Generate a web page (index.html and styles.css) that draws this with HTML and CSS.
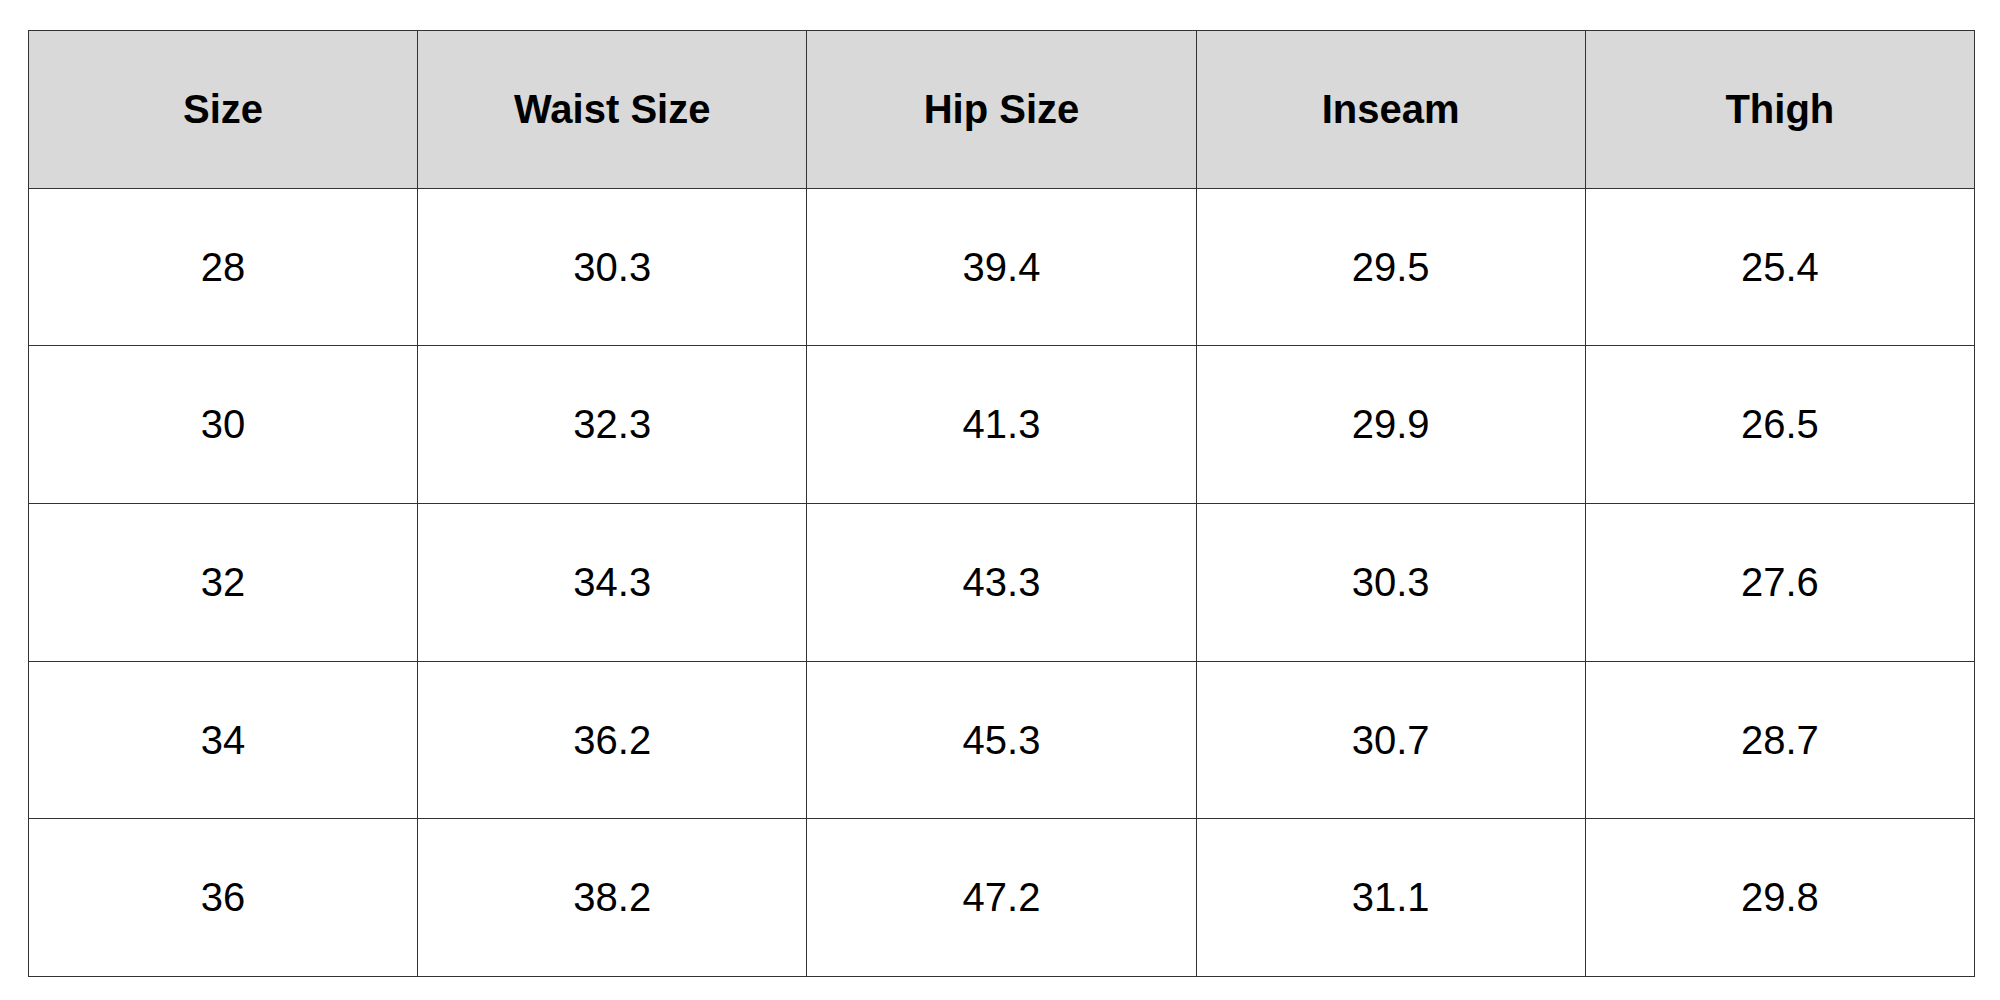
FILE: index.html
```html
<!DOCTYPE html>
<html>
<head>
<meta charset="utf-8">
<link rel="stylesheet" href="styles.css">
</head>
<body>
<table class="size-chart">
  <thead>
    <tr><th>Size</th><th>Waist Size</th><th>Hip Size</th><th>Inseam</th><th>Thigh</th></tr>
  </thead>
  <tbody>
    <tr><td>28</td><td>30.3</td><td>39.4</td><td>29.5</td><td>25.4</td></tr>
    <tr><td>30</td><td>32.3</td><td>41.3</td><td>29.9</td><td>26.5</td></tr>
    <tr><td>32</td><td>34.3</td><td>43.3</td><td>30.3</td><td>27.6</td></tr>
    <tr><td>34</td><td>36.2</td><td>45.3</td><td>30.7</td><td>28.7</td></tr>
    <tr><td>36</td><td>38.2</td><td>47.2</td><td>31.1</td><td>29.8</td></tr>
  </tbody>
</table>
</body>
</html>
```
FILE: styles.css
```css
html, body {
  margin: 0;
  padding: 0;
  background: #ffffff;
}
body {
  padding: 30px 0 0 28px;
  font-family: "Liberation Sans", Arial, sans-serif;
  color: #000;
}
.size-chart {
  border-collapse: collapse;
  table-layout: fixed;
  width: 1947px;
}
.size-chart tr {
  height: 157.7px;
}
.size-chart th,
.size-chart td {
  border: 1px solid #333;
  text-align: center;
  vertical-align: middle;
  font-size: 40px;
  padding: 0;
  width: 20%;
}
.size-chart th {
  background: #d9d9d9;
  font-weight: bold;
}
.size-chart td {
  font-weight: normal;
}
```
